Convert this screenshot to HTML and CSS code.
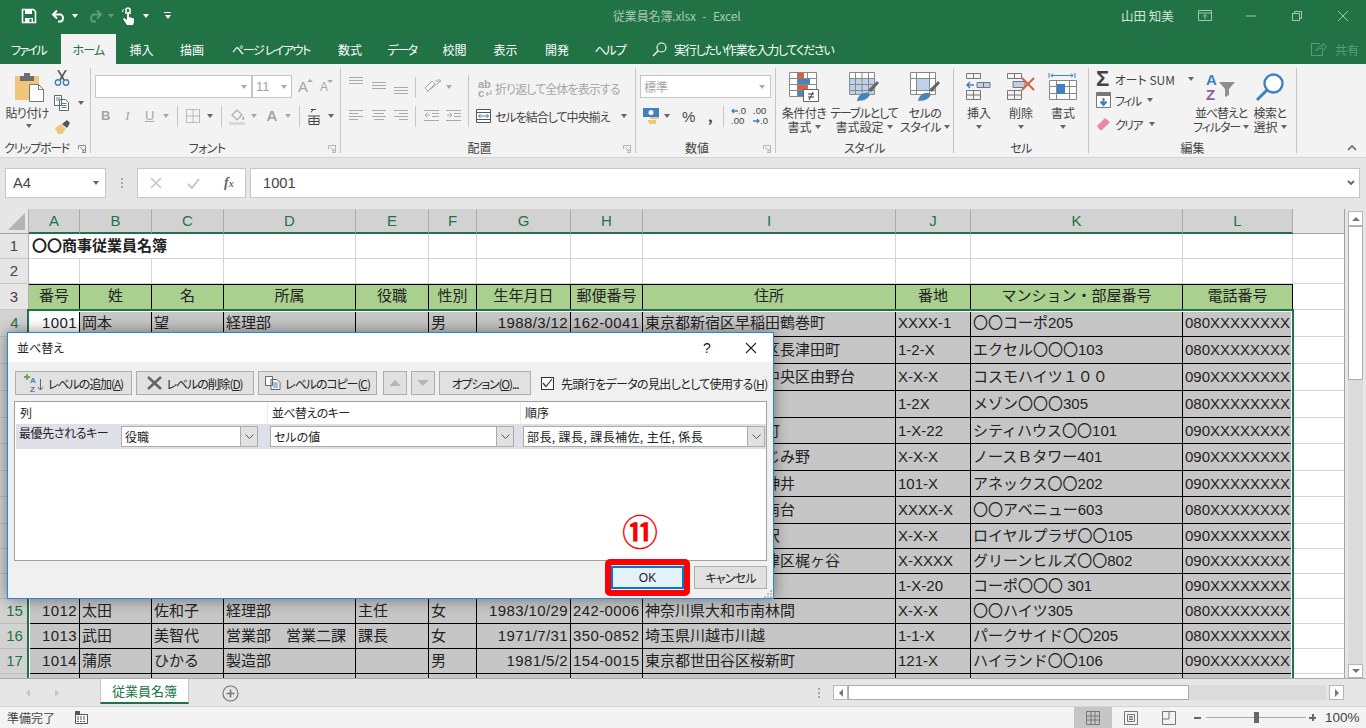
FILE: index.html
```html
<!DOCTYPE html>
<html lang="ja">
<head>
<meta charset="utf-8">
<title>従業員名簿.xlsx - Excel</title>
<link rel="stylesheet" href="styles.css">
</head>
<body>
<div class="app">

<header class="titlebar">
  <div class="qat">
    <svg class="q-save" width="16" height="16" viewBox="0 0 16 16"><path d="M1.5 1.5h11l2 2v11h-13z" fill="none" stroke="#fff" stroke-width="1.6"/><path d="M4 2h7v4H4z" fill="#fff"/><path d="M4 10h8v5H4z" fill="#fff"/><path d="M8.5 11h2v3h-2z" fill="#217346"/></svg>
    <svg class="q-undo" width="16" height="14" viewBox="0 0 16 14"><path d="M6 1.5 2 5.5l4 4M2 5.5h8a4 4 0 0 1 0 7H7" fill="none" stroke="#fff" stroke-width="2"/></svg>
    <i class="caret white q-c1"></i>
    <svg class="q-redo" width="16" height="14" viewBox="0 0 16 14"><path d="M10 1.5l4 4-4 4M14 5.5H6a4 4 0 0 0 0 7h3" fill="none" stroke="#5f9c7d" stroke-width="2"/></svg>
    <i class="caret dim q-c2"></i>
    <svg class="q-touch" width="14" height="18" viewBox="0 0 14 18"><path d="M4 7V3a2 2 0 0 1 4 0v4" fill="none" stroke="#fff" stroke-width="1.6"/><path d="M5 5h2v5l5 1.5V15l-1 3H5L1 12l1-1 3 2z" fill="#fff"/><path d="M0.5 5a4 4 0 0 1 1.5-3" stroke="#fff" fill="none"/></svg>
    <i class="caret white q-c3"></i>
    <span class="q-custom"><b></b><i class="caret white"></i></span>
  </div>
  <div class="doc-title">従業員名簿.xlsx - Excel</div>
  <div class="win">
    <span class="user">山田 知美</span>
    <svg class="w-disp" width="14" height="11" viewBox="0 0 14 11"><path d="M.5.5h13v10H.5zM.5 3h13M7 9V5M5 6.5 7 4.5l2 2" fill="none" stroke="#a5c8b4"/></svg>
    <svg class="w-min" width="10" height="2" viewBox="0 0 10 2"><path d="M0 1h10" stroke="#a5c8b4"/></svg>
    <svg class="w-res" width="10" height="10" viewBox="0 0 10 10"><path d="M.5 2.5h7v7h-7zM2.5 2.5v-2h7v7h-2" fill="none" stroke="#a5c8b4"/></svg>
    <svg class="w-close" width="10" height="10" viewBox="0 0 10 10"><path d="M0 0l10 10M10 0 0 10" stroke="#a5c8b4"/></svg>
  </div>
</header>

<nav class="tabs">
  <span class="tab t-file">ファイル</span>
  <span class="tab t-home">ホーム</span>
  <span class="tab t-ins">挿入</span>
  <span class="tab t-draw">描画</span>
  <span class="tab t-page">ページ レイアウト</span>
  <span class="tab t-form">数式</span>
  <span class="tab t-data">データ</span>
  <span class="tab t-rev">校閲</span>
  <span class="tab t-view">表示</span>
  <span class="tab t-dev">開発</span>
  <span class="tab t-help">ヘルプ</span>
  <span class="tell">
    <svg width="15" height="15" viewBox="0 0 15 15"><circle cx="9.5" cy="5.5" r="4.5" fill="none" stroke="#fff" stroke-width="1.1"/><path d="M6.2 8.8 1 14" stroke="#fff" stroke-width="1.4"/></svg>
    <span class="tell-text">実行したい作業を入力してください</span>
  </span>
  <span class="share">
    <svg width="16" height="14" viewBox="0 0 16 14"><path d="M9 1.5h-8.500v12h11V9M5 9c1-4 4-5.500 7-5.500V1l3.500 4L12 8.500V6c-3 0-5 1-7 3z" fill="none" stroke="#5d9b7c"/></svg>
    共有
  </span>
</nav>

<section class="ribbon">
  <div class="grp g-clip">
    <div class="grp-body clip-body">
      <div class="paste">
        <svg width="29" height="30" viewBox="0 0 29 30"><path d="M0 4h24v24H0z" fill="#efc67c"/><path d="M5 4h14v5H5z" fill="#6d6d6d"/><path d="M9 1h6v4H9z" fill="#6d6d6d"/><path d="M14.500 12.500h9l5 5v12h-14z" fill="#fff" stroke="#777"/><path d="M23.500 12.500v5h5" fill="none" stroke="#777"/></svg>
        <span>貼り付け</span>
        <i class="caret"></i>
      </div>
      <div class="clip-side">
        <svg width="16" height="16" viewBox="0 0 16 16"><path d="M4 0l6 10M12 0 6 10" stroke="#555" stroke-width="1.6"/><circle cx="4" cy="12.500" r="2.700" fill="none" stroke="#3f80bd" stroke-width="1.4"/><circle cx="12" cy="12.500" r="2.700" fill="none" stroke="#3f80bd" stroke-width="1.4"/></svg>
        <div class="copy-row">
          <svg width="16" height="16" viewBox="0 0 16 16"><path d="M.5.500h7v10h-7zM5.500 4.500h6l3 3v8h-9z" fill="#fff" stroke="#666"/><path d="M2 3h4M2 5h3M7.500 8.500h5M7.500 10.500h5M7.500 12.500h5" stroke="#4a83ba"/></svg>
          <i class="caret"></i>
        </div>
        <svg width="17" height="15" viewBox="0 0 17 15"><path d="M1 9l6-4 5 5-4 5H4z" fill="#efc67c"/><path d="M8 5l5-4 3 3-3 5z" fill="#555"/></svg>
      </div>
    </div>
    <div class="grp-label has-launch clip-label">クリップボード<svg class="launch" width="8" height="8" viewBox="0 0 8 8"><path d="M.5 4V.5H7.500V7.500H4M2 2l4 4M4 6h2V4" fill="none" stroke="#8a8a8a"/></svg></div>
  </div>

  <div class="grp g-font">
    <div class="grp-body">
      <div class="font-row1">
        <div class="box font-name"><i class="caret pale"></i></div>
        <div class="box font-size"><span>11</span><i class="caret pale"></i></div>
        <span class="fa big-a">A<i class="up"></i></span>
        <span class="fa small-a">A<i class="down"></i></span>
      </div>
      <div class="font-row2">
        <b class="fs fs-b">B</b>
        <i class="fs fs-i">I</i>
        <u class="fs fs-u">U</u>
        <i class="caret pale cr-u"></i>
        <i class="vsep s-1"></i>
        <svg class="i-bord" width="14" height="14" viewBox="0 0 14 14"><path d="M.5.500h13v13H.5zM7 .5v13M.5 7h13" fill="none" stroke="#888" stroke-dasharray="1 1"/></svg>
        <i class="caret cr-b"></i>
        <i class="vsep s-2"></i>
        <svg class="i-fill" width="17" height="17" viewBox="0 0 17 17"><path d="M3 7l5-5 5 5-5 5z" fill="none" stroke="#aaa" stroke-width="1.2"/><path d="M14 8l1.500 3-1.500 1-1-1z" fill="#aaa"/><path d="M0 14h16v3H0z" fill="#d9d9d9"/></svg>
        <i class="caret pale cr-f"></i>
        <b class="fs fs-a">A</b>
        <i class="caret pale cr-a"></i>
        <i class="vsep s-3"></i>
        <svg class="i-ph" width="12" height="17" viewBox="0 0 12 17"><path d="M3 1.500h5M5 1.500l-2 3M0 8h12M1 10.500h10v6H1zM6 8v8.500M1 13.500h10" fill="none" stroke="#444"/></svg>
        <i class="caret cr-p"></i>
      </div>
    </div>
    <div class="grp-label has-launch kana">フォント<svg class="launch" width="8" height="8" viewBox="0 0 8 8"><path d="M.5 4V.5H7.500V7.500H4M2 2l4 4M4 6h2V4" fill="none" stroke="#b5b5b5"/></svg></div>
  </div>

  <div class="grp g-align">
    <div class="grp-body align-body">
      <div class="align-left">
        <div class="al-row al-top">
          <svg class="al a1" width="14" height="8" viewBox="0 0 14 8"><path d="M0 .5h14M0 3.500h14M0 6.500h14" stroke="#aaa"/></svg>
          <svg class="al a2" width="14" height="8" viewBox="0 0 14 8"><path d="M0 .5h14M0 3.500h14M0 6.500h14" stroke="#aaa"/></svg>
          <svg class="al a3" width="14" height="8" viewBox="0 0 14 8"><path d="M0 .5h14M0 3.500h14M0 6.500h14" stroke="#aaa"/></svg>
          <i class="vsep s-al"></i>
          <svg class="i-ori" width="18" height="15" viewBox="0 0 18 15"><path d="M1 9 8 2l3 3-7 7zM11 2h6M14 0l3 2-3 2M3 13l11-9" fill="none" stroke="#aaa"/></svg>
          <i class="caret pale cr-o"></i>
        </div>
        <div class="al-row al-bot">
          <svg class="al a1" width="14" height="12" viewBox="0 0 14 12"><path d="M0 .5h14M0 3.500h9M0 6.500h14M0 9.500h9" stroke="#aaa"/></svg>
          <svg class="al a2b" width="14" height="12" viewBox="0 0 14 12"><path d="M0 .5h14M2 3.500h10M0 6.500h14M2 9.500h10" stroke="#aaa"/></svg>
          <svg class="al a3b" width="14" height="12" viewBox="0 0 14 12"><path d="M0 .5h14M5 3.500h9M0 6.500h14M5 9.500h9" stroke="#aaa"/></svg>
          <i class="vsep s-al"></i>
          <svg class="i-in1" width="15" height="12" viewBox="0 0 15 12"><path d="M0 .5h15M8 3.500h7M8 6.500h7M0 10.500h15M6 5H1M3.500 2.500 1 5l2.500 2.500" fill="none" stroke="#aaa"/></svg>
          <svg class="i-in2" width="15" height="12" viewBox="0 0 15 12"><path d="M0 .5h15M8 3.500h7M8 6.500h7M0 10.500h15M1 5h5M3.500 2.500 6 5 3.500 7.500" fill="none" stroke="#aaa"/></svg>
        </div>
      </div>
      <i class="vsep s-tall"></i>
      <div class="align-right">
        <div class="wrap-row">
          <span class="abc">ab<br>c<svg width="7" height="7" viewBox="0 0 7 7"><path d="M6 0v4H1M3 2 1 4l2 2" fill="none" stroke="#aaa"/></svg></span>
          <span class="muted">折り返して全体を表示する</span>
        </div>
        <div class="merge-row">
          <svg width="15" height="14" viewBox="0 0 15 14"><path d="M.5.500h14v13H.5zM.5 3.500h14M.5 10.500h14" fill="#fff" stroke="#555"/><path d="M2.500 7h10M4.500 5l-2 2 2 2M10.500 5l2 2-2 2" fill="none" stroke="#3f80bd"/></svg>
          <span class="merge-text">セルを結合して中央揃え</span>
          <i class="caret"></i>
        </div>
      </div>
    </div>
    <div class="grp-label has-launch">配置<svg class="launch" width="8" height="8" viewBox="0 0 8 8"><path d="M.5 4V.5H7.500V7.500H4M2 2l4 4M4 6h2V4" fill="none" stroke="#b5b5b5"/></svg></div>
  </div>

  <div class="grp g-num">
    <div class="grp-body">
      <div class="box num-box"><span>標準</span><i class="caret pale"></i></div>
      <div class="num-row">
        <svg class="i-cur" width="16" height="16" viewBox="0 0 16 16"><path d="M0 0h16v9H0z" fill="#3f80bd"/><circle cx="8" cy="4.500" r="2.500" fill="#fff"/><path d="M7 9h9v2H7zM5 12h8v2H5zM6 14h7v2H6z" fill="#efc67c"/></svg>
        <i class="caret cr-cur"></i>
        <span class="pct">%</span>
        <span class="comma">,</span>
        <i class="vsep s-num"></i>
        <span class="dec d1"><svg width="7" height="6" viewBox="0 0 7 6"><path d="M7 3H1M3 1 1 3l2 2" fill="none" stroke="#3f80bd" stroke-width="1.300"/></svg>.0<br>.00</span>
        <span class="dec d2">.00<br><svg width="7" height="6" viewBox="0 0 7 6"><path d="M0 3h6M4 1l2 2-2 2" fill="none" stroke="#3f80bd" stroke-width="1.300"/></svg>.0</span>
      </div>
    </div>
    <div class="grp-label has-launch">数値<svg class="launch" width="8" height="8" viewBox="0 0 8 8"><path d="M.5 4V.5H7.500V7.500H4M2 2l4 4M4 6h2V4" fill="none" stroke="#b5b5b5"/></svg></div>
  </div>

  <div class="grp g-style">
    <div class="grp-body big-row">
      <div class="big w56">
        <svg width="30" height="30" viewBox="0 0 30 30"><path d="M.5.500h27v24H.5zM.5 6.500h27M.5 12.500h27M.5 18.500h27M8.500.500v24M18.500.500v24" fill="#fff" stroke="#888"/><path d="M9 1h6v5H9z" fill="#d9603b"/><path d="M9 7h12v5H9z" fill="#4a83ba"/><path d="M9 13h9v5H9z" fill="#d9603b"/><path d="M9 19h5v5H9z" fill="#4a83ba"/><path d="M14.500 17.500h15v12h-15z" fill="#fff" stroke="#666"/><path d="M19 22h6M19 25h6M24 20l-4 8" stroke="#333" fill="none"/></svg>
        <span class="snug">条件付き</span><span>書式<i class="caret"></i></span>
      </div>
      <div class="big w64">
        <svg width="30" height="30" viewBox="0 0 30 30"><path d="M.5.500h25v22H.5z" fill="#fff" stroke="#888"/><path d="M1 6h24v16H1z" fill="#bcd2ea"/><path d="M.5 6.500h25M.5 12.500h25M.5 18.500h25M6.500.500v22M13 .500v22M19.500.500v22" stroke="#888" fill="none"/><path d="M19 18l9-9 2 2-8 9z" fill="#666"/><path d="M8 29c1-6 6-9 11-8l2 2c-2 3-5 6-13 6z" fill="#4a83ba"/></svg>
        <span class="tight">テーブルとして</span><span>書式設定<i class="caret"></i></span>
      </div>
      <div class="big w58">
        <svg width="30" height="30" viewBox="0 0 30 30"><path d="M.5.500h25v22H.5zM.5 6.500h25M.5 18.500h25M6.500.500v22M19.500.500v22" fill="#fff" stroke="#888"/><path d="M7 7h12v11H7z" fill="#bcd2ea"/><path d="M19 18l9-9 2 2-8 9z" fill="#666"/><path d="M8 29c1-6 6-9 11-8l2 2c-2 3-5 6-13 6z" fill="#4a83ba"/></svg>
        <span class="snug">セルの</span><span class="snug">スタイル<i class="caret"></i></span>
      </div>
    </div>
    <div class="grp-label kana">スタイル</div>
  </div>

  <div class="grp g-cells">
    <div class="grp-body big-row">
      <div class="big w42">
        <svg width="30" height="30" viewBox="0 0 30 30"><path d="M2.500 1.500h14v5h-14zM9.500 1.500v5M2.500 18.500h14v9h-14zM9.500 18.500v9M2.500 23h14" fill="none" stroke="#777"/><path d="M13 10.500h13v5H13z" fill="#bcd2ea" stroke="#777"/><path d="M19.500 10.500v5" stroke="#777"/><path d="M10 13H3M6 10l-3 3 3 3" fill="none" stroke="#3f80bd" stroke-width="1.500"/></svg>
        <span>挿入</span><i class="caret"></i>
      </div>
      <div class="big w42">
        <svg width="30" height="30" viewBox="0 0 30 30"><path d="M1.500 1.500h14v5h-14zM8.500 1.500v5M1.500 18.500h14v9h-14zM8.500 18.500v9M1.500 23h14" fill="none" stroke="#777"/><path d="M7 9.500h12v6H7z" fill="#bcd2ea" stroke="#777"/><path d="M16 6l12 12M28 6 16 18" stroke="#d9603b" stroke-width="2"/></svg>
        <span>削除</span><i class="caret"></i>
      </div>
      <div class="big w42">
        <svg width="30" height="30" viewBox="0 0 30 30"><path d="M1 1v5M27 1v5M3 3.500h22M5 1.500 3 3.500l2 2M23 1.500l2 2-2 2" fill="none" stroke="#3f80bd"/><path d="M1.500 8.500h27v19H1.500zM1.500 14.500h27M1.500 21.500h27M8.500 8.500v19M21.500 8.500v19" fill="#fff" stroke="#888"/><path d="M9 12h8v10H9z" fill="#3f80bd"/></svg>
        <span>書式</span><i class="caret"></i>
      </div>
    </div>
    <div class="grp-label kana">セル</div>
  </div>

  <div class="grp g-edit">
    <div class="grp-body edit-body">
      <div class="edit-col">
        <div class="ed-row r-sum"><span class="sigma">Σ</span><span>オート SUM</span><i class="caret cr-sum"></i></div>
        <div class="ed-row r-fill"><svg width="15" height="16" viewBox="0 0 15 16"><path d="M.5.500h14v15H.5z" fill="#fff" stroke="#777"/><path d="M1 1h13v3H1z" fill="#777"/><path d="M7.500 6v7M4.500 9.500l3 3.500 3-3.500" fill="none" stroke="#3f80bd" stroke-width="2"/></svg><span class="tighter">フィル</span><i class="caret"></i></div>
        <div class="ed-row r-clear"><svg width="15" height="14" viewBox="0 0 15 14"><path d="M1 9l8-8 5 4-8 8H4z" fill="#ea8a9c"/></svg><span class="tighter">クリア</span><i class="caret"></i></div>
      </div>
      <div class="big w54">
        <svg width="30" height="28" viewBox="0 0 30 28"><text x="0" y="12" class="sort-a">A</text><text x="0" y="27" class="sort-z">Z</text><path d="M13 9h16l-6 7v6l-4 2v-8z" fill="#8f8f8f"/></svg>
        <span class="tight">並べ替えと</span><span class="tight">フィルター<i class="caret"></i></span>
      </div>
      <div class="big w44">
        <svg width="30" height="28" viewBox="0 0 30 28"><circle cx="18.500" cy="10.500" r="9" fill="#fff" stroke="#3f80bd" stroke-width="2.400"/><path d="M12 17 2 27" stroke="#3f80bd" stroke-width="3"/></svg>
        <span class="snug">検索と</span><span>選択<i class="caret"></i></span>
      </div>
    </div>
    <div class="grp-label">編集</div>
  </div>

  <div class="collapse"><svg width="10" height="6" viewBox="0 0 10 6"><path d="M1 5l4-4 4 4" fill="none" stroke="#666" stroke-width="1.600"/></svg></div>
</section>

<section class="formula">
  <div class="namebox"><span>A4</span><i class="caret"></i></div>
  <div class="dots"><b></b><b></b><b></b></div>
  <div class="fx-box">
    <svg width="12" height="12" viewBox="0 0 12 12"><path d="M1 1l10 10M11 1 1 11" stroke="#c6c6c6" stroke-width="1.600"/></svg>
    <svg width="13" height="11" viewBox="0 0 13 11"><path d="M1 6l4 4 7-9" fill="none" stroke="#c6c6c6" stroke-width="2"/></svg>
    <span class="fx">f<sub>x</sub></span>
  </div>
  <div class="fx-input"><span>1001</span><svg width="8" height="6" viewBox="0 0 8 6"><path d="M1 1l3 3 3-3" fill="none" stroke="#666" stroke-width="1.800"/></svg></div>
</section>

<section class="sheet">
  <div class="grid-wrap">
    <table class="grid">
      <colgroup>
        <col class="col-rh"><col class="col-a"><col class="col-b"><col class="col-c"><col class="col-d"><col class="col-e"><col class="col-f"><col class="col-g"><col class="col-h"><col class="col-i"><col class="col-j"><col class="col-k"><col class="col-l"><col class="col-m">
      </colgroup>
      <thead>
        <tr class="r25">
          <th class="corner"><svg width="17" height="17" viewBox="0 0 17 17"><path d="M0 17h17V0z" fill="#b4b4b4"/></svg></th>
          <th class="ch">A</th><th class="ch">B</th><th class="ch">C</th><th class="ch">D</th><th class="ch">E</th><th class="ch">F</th><th class="ch">G</th><th class="ch">H</th><th class="ch">I</th><th class="ch">J</th><th class="ch">K</th><th class="ch">L</th><th class="blank"></th>
        </tr>
      </thead>
      <tbody>
        <tr class="r25 plain"><th>1</th><td class="title-cell" colspan="3">〇〇商事従業員名簿</td><td></td><td></td><td></td><td></td><td></td><td></td><td></td><td></td><td></td><td></td></tr>
        <tr class="r25 plain"><th>2</th><td></td><td></td><td></td><td></td><td></td><td></td><td></td><td></td><td></td><td></td><td></td><td></td><td></td></tr>
        <tr class="r26 head"><th>3</th><td>番号</td><td>姓</td><td>名</td><td>所属</td><td>役職</td><td>性別</td><td>生年月日</td><td>郵便番号</td><td>住所</td><td>番地</td><td>マンション・部屋番号</td><td>電話番号</td><td class="m"></td></tr>
        <tr class="r27 sel"><th>4</th><td class="num active">1001</td><td>岡本</td><td>望</td><td>経理部</td><td></td><td>男</td><td class="num">1988/3/12</td><td class="zip">162-0041</td><td>東京都新宿区早稲田鶴巻町</td><td>XXXX-1</td><td>〇〇コーポ205</td><td>080XXXXXXXX</td><td class="m"></td></tr>
        <tr class="r27 sel"><th>5</th><td></td><td></td><td></td><td></td><td></td><td></td><td></td><td></td><td>神奈川県横浜市緑区長津田町</td><td>1-2-X</td><td>エクセル〇〇〇103</td><td>080XXXXXXXX</td><td class="m"></td></tr>
        <tr class="r27 sel"><th>6</th><td></td><td></td><td></td><td></td><td></td><td></td><td></td><td></td><td>神奈川県相模原市中央区由野台</td><td>X-X-X</td><td>コスモハイツ１００</td><td>090XXXXXXXX</td><td class="m"></td></tr>
        <tr class="r27 sel"><th>7</th><td></td><td></td><td></td><td></td><td></td><td></td><td></td><td></td><td></td><td>1-2X</td><td>メゾン〇〇〇305</td><td>080XXXXXXXX</td><td class="m"></td></tr>
        <tr class="r26 sel"><th>8</th><td></td><td></td><td></td><td></td><td></td><td></td><td></td><td></td><td>東京都千代田区麹町</td><td>1-X-22</td><td>シティハウス〇〇101</td><td>090XXXXXXXX</td><td class="m"></td></tr>
        <tr class="r27 sel"><th>9</th><td></td><td></td><td></td><td></td><td></td><td></td><td></td><td></td><td>千葉県八千代市ふじみ野</td><td>X-X-X</td><td>ノースＢタワー401</td><td>090XXXXXXXX</td><td class="m"></td></tr>
        <tr class="r26 sel"><th>10</th><td></td><td></td><td></td><td></td><td></td><td></td><td></td><td></td><td>東京都練馬区上石神井</td><td>101-X</td><td>アネックス〇〇202</td><td>090XXXXXXXX</td><td class="m"></td></tr>
        <tr class="r27 sel"><th>11</th><td></td><td></td><td></td><td></td><td></td><td></td><td></td><td></td><td>東京都八王子市緑南台</td><td>XXXX-X</td><td>〇〇アベニュー603</td><td>080XXXXXXXX</td><td class="m"></td></tr>
        <tr class="r25 sel"><th>12</th><td></td><td></td><td></td><td></td><td></td><td></td><td></td><td></td><td>東京都世田谷区深沢</td><td>X-X-X</td><td>ロイヤルプラザ〇〇105</td><td>090XXXXXXXX</td><td class="m"></td></tr>
        <tr class="r25 sel"><th>13</th><td></td><td></td><td></td><td></td><td></td><td></td><td></td><td></td><td>神奈川県川崎市高津区梶ヶ谷</td><td>X-XXXX</td><td>グリーンヒルズ〇〇802</td><td>090XXXXXXXX</td><td class="m"></td></tr>
        <tr class="r25 sel"><th>14</th><td></td><td></td><td></td><td></td><td></td><td></td><td></td><td></td><td></td><td>1-X-20</td><td>コーポ〇〇〇 301</td><td>090XXXXXXXX</td><td class="m"></td></tr>
        <tr class="r25 sel"><th>15</th><td class="num">1012</td><td>太田</td><td>佐和子</td><td>経理部</td><td>主任</td><td>女</td><td class="num">1983/10/29</td><td class="zip">242-0006</td><td>神奈川県大和市南林間</td><td>X-X-X</td><td>〇〇ハイツ305</td><td>080XXXXXXXX</td><td class="m"></td></tr>
        <tr class="r25 sel"><th>16</th><td class="num">1013</td><td>武田</td><td>美智代</td><td>営業部　営業二課</td><td>課長</td><td>女</td><td class="num">1971/7/31</td><td class="zip">350-0852</td><td>埼玉県川越市川越</td><td>1-1-X</td><td>パークサイド〇〇205</td><td>080XXXXXXXX</td><td class="m"></td></tr>
        <tr class="r25 sel"><th>17</th><td class="num">1014</td><td>蒲原</td><td>ひかる</td><td>製造部</td><td></td><td>男</td><td class="num">1981/5/2</td><td class="zip">154-0015</td><td>東京都世田谷区桜新町</td><td>121-X</td><td>ハイランド〇〇106</td><td>090XXXXXXXX</td><td class="m"></td></tr>
        <tr class="r25 sel"><th></th><td></td><td></td><td></td><td></td><td></td><td></td><td></td><td></td><td></td><td></td><td></td><td></td><td class="m"></td></tr>
      </tbody>
    </table>
    <div class="selection"></div>
  </div>
  <div class="vscroll">
    <div class="sb-btn sb-up"><i class="tri-up"></i></div>
    <div class="sb-thumb"></div>
    <div class="sb-track"></div>
    <div class="sb-btn sb-down"><i class="tri-down"></i></div>
  </div>
</section>

<section class="sheetbar">
  <span class="nav-tri nav-l"></span>
  <span class="nav-tri nav-r"></span>
  <div class="sheet-tab">従業員名簿</div>
  <svg class="add" width="17" height="17" viewBox="0 0 17 17"><circle cx="8.500" cy="8.500" r="7.500" fill="none" stroke="#777" stroke-width="1.200"/><path d="M8.500 4.500v8M4.500 8.500h8" stroke="#777" stroke-width="1.600"/></svg>
  <div class="bar-dots"><b></b><b></b><b></b></div>
  <div class="hscroll">
    <div class="hs-btn"><i class="tri-left"></i></div>
    <div class="hs-thumb"></div>
    <div class="hs-track"></div>
    <div class="hs-btn"><i class="tri-right"></i></div>
  </div>
</section>

<footer class="status">
  <span class="ready">準備完了</span>
  <svg class="macro" width="13" height="13" viewBox="0 0 13 13"><path d="M.5 3.500h12v9H.5z" fill="#fff" stroke="#555"/><path d="M0 0h5v4H0z" fill="#555"/><path d="M2 6h9M2 8h9M2 10.500h9" stroke="#555" stroke-dasharray="2 1"/></svg>
  <div class="views">
    <div class="view on"><svg width="14" height="14" viewBox="0 0 14 14"><path d="M.5.500h13v13H.5zM.5 5h13M.5 9h13M5 .5v13M9 .5v13" fill="none" stroke="#777"/></svg></div>
    <div class="view"><svg width="14" height="14" viewBox="0 0 14 14"><path d="M.5.500h13v13H.5zM3.500 3.500h7v7h-7zM5 5.500h4M5 7h4M5 8.500h4" fill="none" stroke="#777"/></svg></div>
    <div class="view"><svg width="14" height="14" viewBox="0 0 14 14"><path d="M.5.500h13v13H.5zM.5 8h6.500V.5" fill="none" stroke="#777"/></svg></div>
  </div>
  <span class="zm minus"></span>
  <div class="slider"><i></i></div>
  <span class="zm plus"></span>
  <span class="zoom-pct">100%</span>
</footer>

<div class="dialog">
  <div class="dlg-title">
    <span>並べ替え</span>
    <span class="dlg-help">?</span>
    <svg width="12" height="12" viewBox="0 0 12 12"><path d="M1 1l10 10M11 1 1 11" stroke="#222" stroke-width="1.100"/></svg>
  </div>
  <div class="dlg-body">
    <div class="dlg-tools">
      <button class="btn b-add"><svg width="20" height="18" viewBox="0 0 20 18"><path d="M3 0v6M0 3h6" stroke="#6aa84f" stroke-width="1.800"/><text x="6" y="9" class="mini-a">A</text><text x="6" y="18" class="mini-z">Z</text><path d="M16.500 5v11M14 13l2.500 3 2.500-3" fill="none" stroke="#666"/></svg><span>レベルの追加(<u>A</u>)</span></button>
      <button class="btn b-del"><svg width="15" height="14" viewBox="0 0 15 14"><path d="M1 1l13 12M14 1 1 13" stroke="#666" stroke-width="2.600"/></svg><span>レベルの削除(<u>D</u>)</span></button>
      <button class="btn b-copy"><svg width="16" height="14" viewBox="0 0 16 14"><path d="M.5.500h7v9h-7zM6 3.500h6l3 3v7H6z" fill="#fff" stroke="#666"/><path d="M8 7h5M8 9h5M8 11h5" stroke="#4a83ba"/></svg><span>レベルのコピー(<u>C</u>)</span></button>
      <i class="dlg-sep"></i>
      <button class="btn b-arrow"><i class="tri-up big-tri"></i></button>
      <button class="btn b-arrow"><i class="tri-down big-tri"></i></button>
      <button class="btn b-opt"><span>オプション(<u>O</u>)...</span></button>
      <label class="chk"><span class="chk-box"><svg width="11" height="10" viewBox="0 0 11 10"><path d="M1 5l3 3.500L10 1" fill="none" stroke="#333" stroke-width="1.200"/></svg></span><span class="chk-text">先頭行をデータの見出しとして使用する(<u>H</u>)</span></label>
    </div>
    <div class="list">
      <div class="list-head">
        <span class="lh-1">列</span>
        <span class="lh-2">並べ替えのキー</span>
        <span class="lh-3">順序</span>
      </div>
      <div class="list-row">
        <span class="prio">最優先されるキー</span>
        <div class="combo cb-1"><span>役職</span><i class="drop"><svg width="9" height="5" viewBox="0 0 9 5"><path d="M.5.500l4 4 4-4" fill="none" stroke="#555"/></svg></i></div>
        <div class="combo cb-2"><span>セルの値</span><i class="drop"><svg width="9" height="5" viewBox="0 0 9 5"><path d="M.5.500l4 4 4-4" fill="none" stroke="#555"/></svg></i></div>
        <div class="combo cb-3"><span>部長, 課長, 課長補佐, 主任, 係長</span><i class="drop"><svg width="9" height="5" viewBox="0 0 9 5"><path d="M.5.500l4 4 4-4" fill="none" stroke="#555"/></svg></i></div>
      </div>
    </div>
    <div class="dlg-foot">
      <button class="btn ok">OK</button>
      <button class="btn cancel">キャンセル</button>
    </div>
    <svg class="grip" width="9" height="8" viewBox="0 0 9 8"><path d="M6 0h2v2H6zM3 3h2v2H3zM6 3h2v2H6zM0 6h2v2H0zM3 6h2v2H3zM6 6h2v2H6z" fill="#bdbdbd"/></svg>
  </div>
</div>

<div class="ok-mark"></div>
<div class="callout">⑪</div>

</div>
</body>
</html>
```

FILE: styles.css
```css
* { box-sizing: border-box; }
html, body { margin: 0; padding: 0; }
body { width: 1366px; height: 728px; overflow: hidden; background: #e6e6e6; }
.app {
  position: relative; width: 1366px; height: 728px; overflow: hidden;
  font-family: "Noto Sans CJK JP", "Noto Sans", sans-serif;
  font-size: 12px; color: #333; font-feature-settings: "palt";
  display: flex; flex-direction: column;
}
i { font-style: normal; display: block; }
svg { display: block; flex: none; }

.caret { width: 0; height: 0; flex: none; border-left: 3.5px solid transparent; border-right: 3.5px solid transparent; border-top: 4px solid #666; }
.caret.white { border-top-color: #fff; }
.caret.dim { border-top-color: #5f9c7d; }
.caret.pale { border-top-color: #aaa; }
.snug { letter-spacing: -.5px; }
.tight { letter-spacing: -1.1px; }
.tighter { letter-spacing: -1.6px; }
.kana { letter-spacing: -.6px; }

/* title bar */
.titlebar { height: 34px; background: #217346; display: flex; align-items: center; position: relative; padding-bottom: 3px; flex: none; }
.qat { display: flex; align-items: center; padding-left: 21px; width: 613px; }
.q-undo { margin-left: 14px; }
.q-c1 { margin-left: 5px; }
.q-redo { margin-left: 9px; }
.q-c2 { margin-left: 5px; }
.q-touch { margin-left: 8px; }
.q-c3 { margin-left: 7px; }
.q-custom { margin-left: 15px; display: flex; flex-direction: column; align-items: center; gap: 2px; }
.q-custom b { width: 7px; height: 1px; background: #fff; }
.doc-title { width: 153px; color: #a6c9b5; font-size: 12px; font-feature-settings: normal; white-space: nowrap; word-spacing: 4px; letter-spacing: -.15px; }
.win { display: flex; align-items: center; margin-left: 355px; color: #d5e5db; }
.user { font-size: 12.5px; width: 51px; white-space: nowrap; font-feature-settings: normal; }
.w-disp { margin-left: 26px; }
.w-min { margin-left: 34px; }
.w-res { margin-left: 36px; }
.w-close { margin-left: 36px; }

/* tabs */
.tabs { height: 30px; background: #217346; display: flex; flex: none; color: #fff; position: relative; }
.tab { display: flex; align-items: center; justify-content: center; height: 30px; white-space: nowrap; }
.t-file { width: 61px; padding-right: 4px; letter-spacing: -1.6px; }
.t-home { width: 55px; background: #f3f3f3; color: #217346; letter-spacing: -.8px; }
.t-ins { width: 51px; }
.t-draw { width: 50px; }
.t-page { width: 108px; letter-spacing: -1.4px; }
.t-form { width: 50px; }
.t-data { width: 54px; letter-spacing: -1.5px; }
.t-rev { width: 51px; }
.t-view { width: 51px; }
.t-dev { width: 52px; }
.t-help { width: 54px; letter-spacing: -1px; }
.tell { display: flex; align-items: center; gap: 7px; margin-left: 15px; white-space: nowrap; }
.tell-text { letter-spacing: -1.2px; }
.share { display: flex; align-items: center; gap: 8px; margin-left: auto; margin-right: 7px; color: #5d9b7c; }

/* ribbon */
.ribbon { height: 94px; flex: none; background: #f3f3f3; border-bottom: 1px solid #d4d4d4; display: flex; position: relative; color: #444; }
.grp { height: 93px; flex: none; display: flex; flex-direction: column; position: relative; }
.grp::after { content: ""; position: absolute; right: 0; top: 4px; bottom: 4px; width: 1px; background: #c6c6c6; }
.grp-body { flex: 1; min-height: 0; }
.grp-label { height: 14px; line-height: 14px; margin-bottom: 2px; text-align: center; position: relative; white-space: nowrap; padding-right: 1px; }
.grp-label.has-launch { padding-right: 18px; }
.clip-label { letter-spacing: -1.3px; }
.launch { position: absolute; right: 5px; top: 4px; }
.g-clip { width: 91px; }
.g-font { width: 250px; }
.g-align { width: 295px; }
.g-num { width: 140px; }
.g-style { width: 178px; }
.g-cells { width: 135px; }
.g-edit { width: 208px; }
.collapse { position: absolute; right: 9px; bottom: 6px; }
.vsep { width: 1px; background: #c6c6c6; flex: none; }

.clip-body { display: flex; }
.paste { width: 54px; padding-top: 8px; display: flex; flex-direction: column; align-items: center; }
.paste svg { margin-right: 0; margin-left: 4px; }
.paste span { margin-top: 4px; line-height: 14px; white-space: nowrap; letter-spacing: -.7px; }
.paste .caret { margin-top: 4px; margin-left: 3px; }
.clip-side { display: flex; flex-direction: column; gap: 8px; padding-top: 6px; }
.copy-row { display: flex; align-items: center; gap: 8px; margin-top: 1px; }

.box { background: #fff; border: 1px solid #c6c6c6; display: flex; align-items: center; height: 23px; }
.font-row1 { display: flex; align-items: center; padding: 11px 0 0 4px; }
.font-name { width: 157px; justify-content: flex-end; padding-right: 4px; }
.font-size { width: 40px; justify-content: space-between; padding: 0 4px 0 3px; color: #a0a0a0; }
.font-size span { font-family: "Liberation Sans", sans-serif; font-size: 13px; }
.fa { color: #a6a6a6; position: relative; font-family: "Liberation Sans", sans-serif; }
.big-a { font-size: 15px; margin-left: 6px; width: 22px; }
.small-a { font-size: 12px; width: 14px; }
.fa i { position: absolute; width: 0; height: 0; border-left: 3px solid transparent; border-right: 3px solid transparent; }
.fa .up { border-bottom: 3px solid #aaa; left: 9px; top: 1px; }
.fa .down { border-top: 3px solid #aaa; left: 7px; top: 0; }
.font-row2 { display: flex; align-items: center; height: 22px; margin-top: 7px; padding-left: 10px; }
.fs { color: #a6a6a6; font-family: "Liberation Sans", sans-serif; font-size: 13px; line-height: 16px; width: 9px; text-align: center; }
.fs-i { margin-left: 13px; font-style: italic; font-family: "Liberation Serif", serif; }
.fs-u { margin-left: 13px; }
.cr-u { margin-left: 9px; }
.s-1 { height: 21px; margin-left: 8px; }
.i-bord { margin-left: 8px; }
.cr-b { margin-left: 7px; }
.s-2 { height: 21px; margin-left: 8px; }
.i-fill { margin-left: 7px; }
.cr-f { margin-left: 5px; }
.fs-a { margin-left: 9px; font-size: 15px; width: 12px; }
.cr-a { margin-left: 7px; }
.s-3 { height: 21px; margin-left: 8px; }
.i-ph { margin-left: 8px; }
.cr-p { margin-left: 8px; }

.align-body { display: flex; padding-top: 11px; }
.align-left { width: 127px; padding-left: 8px; flex: none; }
.al-row { display: flex; }
.al-top { height: 23px; align-items: flex-start; padding-top: 2px; }
.al-top .a2 { margin-left: 9px; margin-top: 5px; }
.al-top .a3 { margin-left: 8px; margin-top: 10px; }
.al-top .s-al { margin-left: 7px; height: 21px; }
.i-ori { margin-left: 8px; margin-top: 2px; }
.cr-o { margin-left: 4px; margin-top: 8px; }
.al-bot { height: 22px; margin-top: 7px; align-items: center; }
.a2b { margin-left: 9px; }
.a3b { margin-left: 8px; }
.al-bot .s-al { margin-left: 7px; height: 21px; }
.i-in1 { margin-left: 8px; }
.i-in2 { margin-left: 7px; }
.s-tall { height: 52px; }
.align-right { padding-left: 7px; }
.wrap-row { display: flex; align-items: center; height: 23px; padding-left: 2px; gap: 5px; padding-top: 4px; }
.abc { color: #aaa; font-family: "Liberation Sans", sans-serif; font-size: 11px; line-height: 9px; width: 12px; display: block; position: relative; white-space: nowrap; font-weight: bold; }
.abc svg { display: inline-block; margin-left: 1px; }
.muted { color: #a6a6a6; white-space: nowrap; letter-spacing: -.9px; }
.merge-row { display: flex; align-items: center; height: 22px; margin-top: 7px; gap: 4px; white-space: nowrap; }
.merge-text { letter-spacing: -1px; }
.merge-row .caret { margin-left: 8px; }

.num-box { width: 131px; margin: 11px 0 0 4px; justify-content: space-between; padding: 0 5px 0 3px; color: #a6a6a6; }
.num-row { display: flex; align-items: center; height: 22px; margin-top: 7px; padding-left: 7px; }
.cr-cur { margin-left: 5px; }
.pct { margin-left: 12px; font-size: 15px; width: 15px; color: #444; font-family: "Liberation Sans", sans-serif; }
.comma { margin-left: 11px; width: 6px; font-size: 14px; font-weight: bold; line-height: 14px; }
.s-num { height: 21px; margin-left: 9px; }
.dec { font-family: "Liberation Sans", sans-serif; font-size: 9.5px; line-height: 10px; margin-left: 7px; width: 15px; white-space: nowrap; }
.dec svg { display: inline-block; }
.d2 { margin-left: 7px; }

.big-row { display: flex; }
.big { flex: none; display: flex; flex-direction: column; align-items: center; padding-top: 8px; line-height: 14px; white-space: nowrap; }
.big > svg { margin-bottom: 4px; height: 30px; }
.big > span { display: flex; align-items: center; gap: 3px; }
.big > .caret { margin-top: 5px; }
.w56 { width: 56px; } .w64 { width: 64px; } .w58 { width: 58px; } .w42 { width: 42px; } .w54 { width: 54px; } .w44 { width: 44px; }
.g-cells .big-row { padding-left: 4px; }
.edit-body { display: flex; }
.edit-col { width: 105px; padding: 6px 0 0 7px; flex: none; }
.ed-row { display: flex; align-items: center; gap: 4px; white-space: nowrap; }
.r-sum { height: 18px; }
.r-fill { height: 16px; margin-top: 4px; }
.r-clear { height: 14px; margin-top: 9px; }
.ed-row .caret { margin-left: 3px; }
.sigma { font-family: "Liberation Sans", sans-serif; font-size: 22px; font-weight: bold; line-height: 18px; width: 15px; color: #444; }
.r-sum .cr-sum { margin-left: 9px; }
.sort-a { font-family: "Liberation Sans", sans-serif; font-weight: bold; font-size: 15px; fill: #3f80bd; }
.sort-z { font-family: "Liberation Sans", sans-serif; font-weight: bold; font-size: 15px; fill: #8e5ba6; }

/* formula bar */
.formula { height: 51px; flex: none; background: #e6e6e6; display: flex; padding: 10px 0 11px 5px; font-family: "Liberation Sans", sans-serif; font-size: 14.67px; color: #444; }
.namebox { width: 101px; background: #fff; border: 1px solid #c6c6c6; display: flex; align-items: center; justify-content: space-between; padding: 0 6px 0 7px; }
.dots { width: 31px; display: flex; flex-direction: column; align-items: center; justify-content: center; gap: 2px; }
.dots b { width: 2px; height: 2px; background: #a8a8a8; }
.fx-box { width: 109px; background: #fff; border: 1px solid #c6c6c6; display: flex; align-items: center; padding-left: 12px; gap: 25px; }
.fx-box .fx { font-family: "Liberation Serif", serif; font-style: italic; font-weight: bold; font-size: 14px; color: #666; margin-left: -1px; }
.fx sub { font-size: 10px; vertical-align: baseline; }
.fx-input { width: 1110px; margin-left: 4px; background: #fff; border: 1px solid #c6c6c6; display: flex; align-items: center; justify-content: space-between; padding: 0 4px 0 12px; }

/* sheet */
.sheet { height: 469px; flex: none; display: flex; background: #e6e6e6; }
.grid-wrap { position: relative; width: 1345px; height: 469px; overflow: hidden; }
.grid { table-layout: fixed; border-collapse: separate; border-spacing: 0; width: 1345px; font-family: "Liberation Sans", "Noto Sans CJK JP", sans-serif; font-size: 15px; color: #222; font-feature-settings: normal; }
.col-rh { width: 29px; } .col-a { width: 51px; } .col-b { width: 72px; } .col-c { width: 72px; } .col-d { width: 132px; } .col-e { width: 73px; } .col-f { width: 48px; } .col-g { width: 94px; } .col-h { width: 72px; } .col-i { width: 253px; } .col-j { width: 75px; } .col-k { width: 212px; } .col-l { width: 110px; } .col-m { width: 52px; }
.r25 { height: 25px; } .r26 { height: 26px; } .r27 { height: 27px; }
.grid th, .grid td { padding: 0 2px; overflow: hidden; white-space: nowrap; line-height: 18px; font-weight: 400; }
.grid tbody th { text-align: center; padding: 0; background: #e6e6e6; color: #444; border-right: 1px solid #b1b1b1; border-bottom: 1px solid #c6c6c6; font-family: "Liberation Sans", sans-serif; }
.corner { background: #e6e6e6; border-right: 1px solid #b1b1b1; border-bottom: 1px solid #a0a0a0; padding: 4px 0 3px 8px !important; }
.ch { background: #d2d2d2; color: #217346; text-align: center; border-right: 1px solid #ababab; border-bottom: 2px solid #217346; font-family: "Liberation Sans", sans-serif; }
.blank { background: #e6e6e6; border-bottom: 1px solid #a0a0a0; border-right: 1px solid #a0a0a0; }
.plain td { background: #fff; border-right: 1px solid #d4d4d4; border-bottom: 1px solid #d4d4d4; }
.plain td:last-child { border-right: 1px solid #a0a0a0; }
.title-cell { font-weight: 700 !important; padding-left: 3px !important; overflow: visible !important; padding-bottom: 1px !important; }
.head td { background: #a9d08e; border-right: 1px solid #000; border-bottom: 1px solid #000; text-align: center; border-top: 1px solid #000; padding-bottom: 2px; }
.head td.m { background: #fff; border: 0; border-right: 1px solid #a0a0a0; border-bottom: 1px solid #d4d4d4; }
.sel td { background: #c6c6c6; border-right: 1px solid #000; border-bottom: 1px solid #000; }
.sel td.m { background: #fff; border: 0; border-right: 1px solid #a0a0a0; border-bottom: 1px solid #d4d4d4; }
.sel td.active { background: #fff; }
.grid .sel th { background: #d2d2d2; color: #217346; border-right: 0; border-bottom: 1px solid #bdbdbd; }
.num { text-align: right; letter-spacing: .4px; }
.zip { letter-spacing: .4px; }
.selection { position: absolute; left: 27px; top: 100px; width: 1267px; height: 380px; border: 2px solid #217346; box-shadow: inset 0 0 0 1px #fff; pointer-events: none; }

.vscroll { width: 21px; padding: 2px 3px 0 3px; display: flex; flex-direction: column; background: #e6e6e6; }
.sb-btn { height: 15px; background: #fff; border: 1px solid #b6b6b6; display: flex; align-items: center; justify-content: center; flex: none; }
.sb-thumb { height: 154px; background: #fff; border: 1px solid #ababab; flex: none; }
.sb-track { flex: 1; background: #dbdbdb; }
.sb-down { height: 14px; }
.tri-up, .tri-down, .tri-left, .tri-right { width: 0; height: 0; }
.tri-up { border-left: 4px solid transparent; border-right: 4px solid transparent; border-bottom: 4px solid #777; }
.tri-down { border-left: 4px solid transparent; border-right: 4px solid transparent; border-top: 4px solid #777; }
.tri-left { border-top: 4px solid transparent; border-bottom: 4px solid transparent; border-right: 4px solid #777; }
.tri-right { border-top: 4px solid transparent; border-bottom: 4px solid transparent; border-left: 4px solid #777; }

/* sheet tabs */
.sheetbar { height: 28px; flex: none; background: #e6e6e6; border-top: 1px solid #ababab; display: flex; align-items: flex-start; }
.nav-tri { width: 0; height: 0; margin-top: 10px; border-top: 4px solid transparent; border-bottom: 4px solid transparent; }
.nav-l { margin-left: 26px; border-right: 4px solid #c6c6c6; }
.nav-r { margin-left: 25px; border-left: 4px solid #c6c6c6; }
.sheet-tab { width: 89px; height: 25px; margin-left: 41px; background: #fff; border: 1px solid #c6c6c6; border-top: 0; border-bottom: 2px solid #217346; color: #217346; text-align: center; line-height: 24px; font-size: 13px; font-feature-settings: normal; }
.add { margin: 6px 0 0 33px; }
.bar-dots { margin: 9px 0 0 579px; display: flex; flex-direction: column; gap: 2px; }
.bar-dots b { width: 2px; height: 2px; background: #a8a8a8; }
.hscroll { margin: 6px 0 0 13px; display: flex; width: 511px; height: 15px; }
.hs-btn { width: 15px; background: #fff; border: 1px solid #b6b6b6; display: flex; align-items: center; justify-content: center; flex: none; }
.hs-thumb { width: 341px; background: #fff; border: 1px solid #ababab; flex: none; }
.hs-track { flex: 1; background: #dbdbdb; margin-right: 3px; }

/* status */
.status { height: 22px; flex: none; background: #f3f3f3; border-top: 1px solid #d4d4d4; display: flex; align-items: center; padding-left: 7px; color: #444; }
.ready { width: 48px; white-space: nowrap; }
.macro { margin-left: 20px; }
.views { display: flex; margin-left: 986px; height: 21px; }
.view { width: 38px; display: flex; align-items: center; justify-content: center; }
.view.on { background: #c6c6c6; }
.zm { width: 7px; height: 2px; background: #666; position: relative; flex: none; }
.minus { margin-left: 6px; }
.plus { margin-left: 3px; }
.plus::after { content: ""; position: absolute; left: 2.5px; top: -2.5px; width: 2px; height: 7px; background: #666; }
.slider { width: 100px; height: 1px; background: #aaa; margin-left: 5px; position: relative; }
.slider i { position: absolute; left: 48px; top: -5px; width: 5px; height: 11px; background: #666; }
.zoom-pct { margin-left: 9px; font-family: "Liberation Sans", sans-serif; font-size: 13.5px; white-space: nowrap; }

/* dialog */
.dialog { position: absolute; left: 7px; top: 332px; width: 767px; height: 267px; background: #f0f0f0; border: 1px solid #2b87d3; box-shadow: 0 0 14px rgba(0,0,0,.45); display: flex; flex-direction: column; color: #222; }
.dlg-title { height: 29px; background: #fff; flex: none; display: flex; align-items: center; padding-left: 9px; }
.dlg-title > span:first-child { width: 686px; white-space: nowrap; }
.dlg-help { width: 42px; font-family: "Liberation Sans", sans-serif; font-size: 14px; font-weight: 400; }
.dlg-body { flex: 1; padding: 8px 6px 0 6px; position: relative; }
.dlg-tools { display: flex; align-items: center; height: 26px; }
.btn { font: inherit; font-feature-settings: inherit; height: 24px; padding: 0; background: #e1e1e1; border: 1px solid #adadad; color: #222; display: flex; align-items: center; justify-content: center; gap: 4px; white-space: nowrap; flex: none; }
.b-add span, .b-del span, .b-copy span { letter-spacing: -1.1px; }
.b-add { width: 117px; margin-left: 1px; }
.b-del { width: 118px; margin-left: 4px; }
.b-copy { width: 119px; margin-left: 4px; }
.dlg-sep { width: 1px; height: 26px; background: #000; margin-left: 3px; }
.b-arrow { width: 24px; margin-left: 3px; }
.b-arrow + .b-arrow { margin-left: 4px; }
.big-tri { border-left-width: 6px; border-right-width: 6px; border-bottom-color: #b5b5b5; border-top-color: #b5b5b5; border-bottom-width: 6px; border-top-width: 6px; }
.b-opt { width: 92px; margin-left: 4px; }
.b-opt span { letter-spacing: -1.2px; }
.chk { display: flex; align-items: center; white-space: nowrap; margin-left: 10px; }
.chk-text { letter-spacing: -.65px; }
.chk-box { width: 13px; height: 13px; border: 1px solid #333; background: #fff; margin-right: 7px; display: flex; align-items: center; justify-content: center; flex: none; }
.mini-a { font-family: "Liberation Sans", sans-serif; font-size: 8px; font-weight: bold; fill: #3f80bd; }
.mini-z { font-family: "Liberation Sans", sans-serif; font-size: 8px; font-weight: bold; fill: #8e5ba6; }
u { text-decoration: underline; }
.list { height: 160px; margin-top: 5px; background: #fff; border: 1px solid #a0a0a0; }
.list-head { height: 22px; display: flex; align-items: center; }
.list-head span { height: 22px; line-height: 22px; padding-left: 5px; border-right: 1px solid #ececec; white-space: nowrap; }
.lh-1 { width: 253px; }
.lh-2 { width: 253px; padding-left: 4px !important; letter-spacing: -.6px; }
.lh-3 { flex: 1; border-right: 0 !important; padding-left: 4px !important; }
.list-row { height: 25px; margin-left: 1px; background: #dfdfe7; display: flex; align-items: flex-start; padding-top: 2px; position: relative; }
.prio { width: 105px; padding-left: 3px; white-space: nowrap; line-height: 14px; font-size: 12px; letter-spacing: -.4px; }
.combo { height: 21px; background: #fff; border: 1px solid #acacac; display: flex; align-items: center; justify-content: space-between; padding-left: 3px; flex: none; }
.cb-1 { width: 137px; }
.cb-2 { width: 244px; margin-left: 12px; }
.cb-3 { width: 242px; margin-left: 9px; letter-spacing: .4px; }
.drop { width: 17px; height: 19px; background: #e1e1e1; border-left: 1px solid #acacac; display: flex; align-items: center; justify-content: center; }
.dlg-foot { display: flex; justify-content: flex-end; gap: 10px; margin-top: 5px; }
.btn.ok { width: 73px; background: #e5f1fb; border: 2px solid #0078d7; font-family: "Liberation Sans", sans-serif; height: 23px; }
.btn.cancel { width: 73px; height: 23px; letter-spacing: -.8px; }
.grip { position: absolute; right: 0; bottom: 0; }

.ok-mark { position: absolute; left: 605px; top: 559px; width: 85px; height: 37px; border: 6px solid #f00; border-radius: 5px; pointer-events: none; }
.callout { position: absolute; left: 620px; top: 508px; width: 40px; height: 44px; text-align: center; font-size: 36px; line-height: 44px; color: #f00; font-weight: 700; text-shadow: 0 0 3px #fff, 0 0 5px #fff, 0 0 7px #fff; font-feature-settings: normal; }
```
